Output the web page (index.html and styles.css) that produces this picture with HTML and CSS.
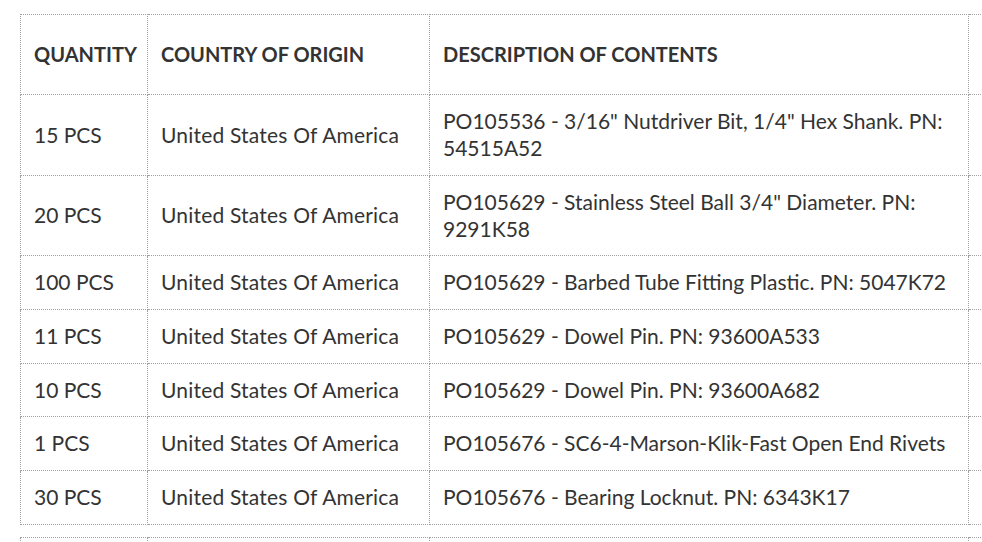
FILE: index.html
```html
<!DOCTYPE html>
<html>
<head>
<meta charset="utf-8">
<link rel="stylesheet" href="styles.css">
</head>
<body>
<div class="page">
  <table class="items">
    <colgroup>
      <col class="c-qty"><col class="c-origin"><col class="c-desc"><col class="c-val">
    </colgroup>
    <thead>
      <tr>
        <th>QUANTITY</th>
        <th>COUNTRY OF ORIGIN</th>
        <th>DESCRIPTION OF CONTENTS</th>
        <th>UNIT VALUE<br>(USD)</th>
      </tr>
    </thead>
    <tbody>
      <tr><td>15 PCS</td><td>United States Of America</td><td>PO105536 - 3/16" Nutdriver Bit, 1/4" Hex Shank. PN: 54515A52</td><td></td></tr>
      <tr><td>20 PCS</td><td>United States Of America</td><td>PO105629 - Stainless Steel Ball 3/4" Diameter. PN: 9291K58</td><td></td></tr>
      <tr><td>100 PCS</td><td>United States Of America</td><td>PO105629 - Barbed Tube Fitting Plastic. PN: 5047K72</td><td></td></tr>
      <tr><td>11 PCS</td><td>United States Of America</td><td>PO105629 - Dowel Pin. PN: 93600A533</td><td></td></tr>
      <tr><td>10 PCS</td><td>United States Of America</td><td>PO105629 - Dowel Pin. PN: 93600A682</td><td></td></tr>
      <tr><td>1 PCS</td><td>United States Of America</td><td>PO105676 - SC6-4-Marson-Klik-Fast Open End Rivets</td><td></td></tr>
      <tr><td>30 PCS</td><td>United States Of America</td><td>PO105676 - Bearing Locknut. PN: 6343K17</td><td></td></tr>
    </tbody>
  </table>
  <table class="items next">
    <colgroup>
      <col class="c-qty"><col class="c-origin"><col class="c-desc"><col class="c-val">
    </colgroup>
    <tbody>
      <tr><td>&nbsp;</td><td></td><td></td><td></td></tr>
    </tbody>
  </table>
</div>
</body>
</html>
```
FILE: styles.css
```css
html, body {
  margin: 0;
  padding: 0;
  background: #ffffff;
  overflow: hidden;
}
.page {
  padding: 14px 0 0 20px;
  width: 1300px;
  font-family: "Lato", "Open Sans", sans-serif;
  color: #333333;
  font-size: 21px;
}
.items {
  border-collapse: collapse;
  table-layout: fixed;
  width: 1148px;
}
.items.next {
  margin-top: 12px;
}
.c-qty { width: 127px; }
.c-origin { width: 282px; }
.c-desc { width: 539px; }
.c-val { width: 200px; }
.items th,
.items td {
  border: 1px dotted #a0a0a0;
  padding: 13px;
  line-height: 26.7px;
  text-align: left;
  vertical-align: middle;
  font-weight: 400;
}
.items td:nth-child(2) {
  letter-spacing: 0.2px;
}
.items th {
  font-size: 20px;
  font-weight: 700;
  white-space: nowrap;
}
```
